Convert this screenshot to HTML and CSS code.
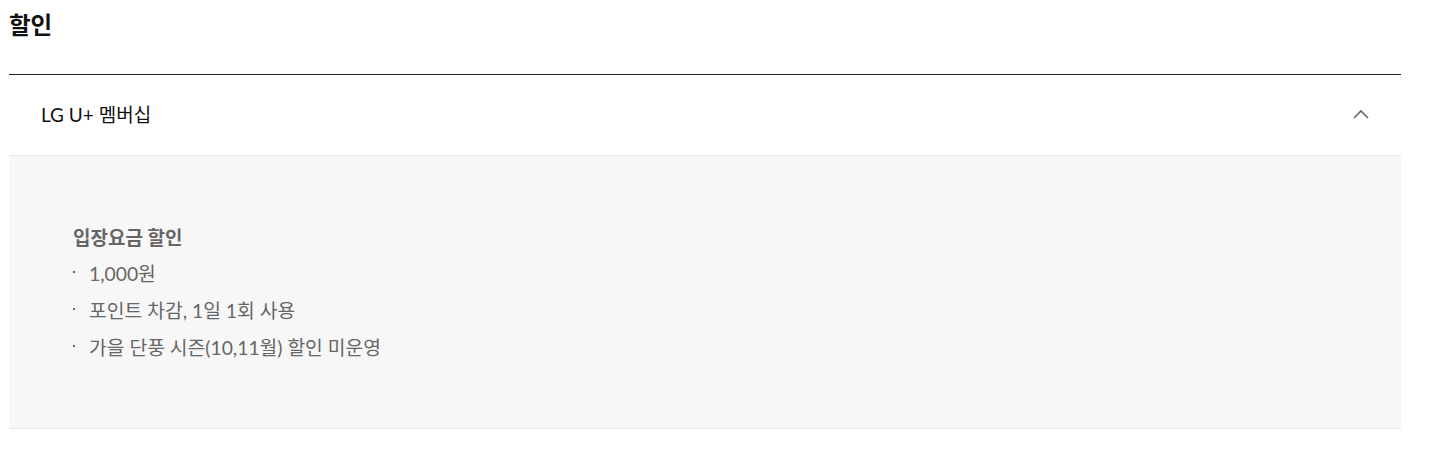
FILE: index.html
```html
<!DOCTYPE html>
<html lang="ko">
<head>
<meta charset="utf-8">
<link rel="stylesheet" href="styles.css">
</head>
<body>
<section class="discount">
  <h2 class="discount-title">할인</h2>
  <div class="accordion">
    <div class="acc-head">
      <span class="acc-label">LG U+ 멤버십</span>
      <svg class="acc-icon" width="16" height="10" viewBox="0 0 16 10"><path d="M1 9 L8 2 L15 9" fill="none" stroke="#666" stroke-width="1.6"/></svg>
    </div>
    <div class="acc-body">
      <p class="acc-sub">입장요금 할인</p>
      <ul class="acc-list">
        <li>1,000원</li>
        <li>포인트 차감, 1일 1회 사용</li>
        <li>가을 단풍 시즌(10,11월) 할인 미운영</li>
      </ul>
    </div>
  </div>
</section>
</body>
</html>
```

FILE: styles.css
```css
* { box-sizing: border-box; }
body {
  margin: 0;
  background: #fff;
  font-family: Lato, "Noto Sans CJK KR", sans-serif;
  color: #222;
}
.discount {
  width: 1392px;
  margin-left: 9px;
}
.discount-title {
  margin: 0;
  height: 74px;
  padding-top: 8px;
  font-size: 23.5px;
  line-height: 34px;
  font-weight: 700;
  color: #111;
}
.accordion {
  border-top: 1px solid #222;
}
.acc-head {
  height: 81px;
  border-bottom: 1px solid #e8e8e8;
  display: flex;
  align-items: center;
  justify-content: space-between;
  padding: 0 32px 3px 32px;
}
.acc-label {
  font-size: 19px;
  color: #111;
}
.acc-icon { display: block; margin-top: 0; }
.acc-body {
  background: #f7f7f7;
  border-bottom: 1px solid #e8e8e8;
  height: 273px;
  padding: 64px 64px 0;
}
.acc-sub {
  margin: 0;
  font-size: 19px;
  line-height: 35px;
  font-weight: 700;
  color: #666;
}
.acc-list {
  list-style: none;
  margin: 0;
  padding: 0;
}
.acc-list li {
  position: relative;
  padding-left: 16px;
  font-size: 19.3px;
  line-height: 37px;
  color: #666;
}
.acc-list li::before {
  content: "";
  position: absolute;
  left: 0;
  top: 16px;
  width: 2px;
  height: 2px;
  background: #666;
}
```
